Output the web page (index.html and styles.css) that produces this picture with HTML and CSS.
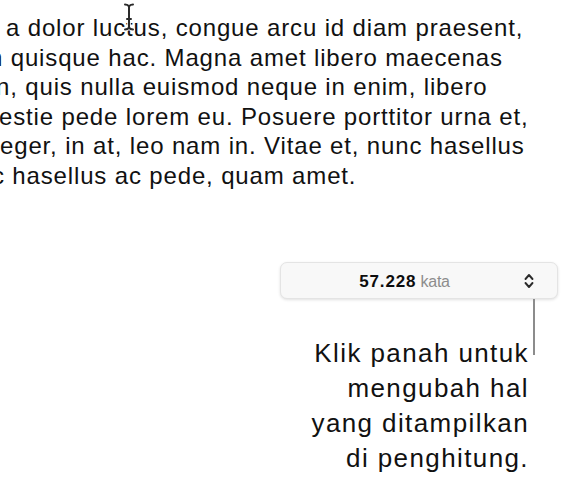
FILE: index.html
```html
<!DOCTYPE html>
<html lang="id">
<head>
<meta charset="utf-8">
<title>Penghitung kata</title>
<link rel="stylesheet" href="styles.css">
</head>
<body>
<div class="page">
  <div class="doc">
    <div class="line l1">a dolor luctus, congue arcu id diam praesent,</div>
    <div class="line l2">n quisque hac. Magna amet libero maecenas</div>
    <div class="line l3">n, quis nulla euismod neque in enim, libero</div>
    <div class="line l4">estie pede lorem eu. Posuere porttitor urna et,</div>
    <div class="line l5">eger, in at, leo nam in. Vitae et, nunc hasellus</div>
    <div class="line l6">c hasellus ac pede, quam amet.</div>
    <svg class="ibeam" width="12" height="28" viewBox="0 0 12 28" aria-hidden="true">
      <path d="M2 1.5 Q5 1.5 6 3.5 Q7 1.5 10 1.5 M6 3.5 V24.5 M2 26.5 Q5 26.5 6 24.5 Q7 26.5 10 26.5 M4 16 H8" fill="none" stroke="#fff" stroke-width="3.6" stroke-linecap="round"/>
      <path d="M2 1.5 Q5 1.5 6 3.5 Q7 1.5 10 1.5 M6 3.5 V24.5 M2 26.5 Q5 26.5 6 24.5 Q7 26.5 10 26.5 M4 16 H8" fill="none" stroke="#2a2a2a" stroke-width="2" stroke-linecap="round"/>
    </svg>
  </div>

  <div class="counter-row">
    <div class="counter">
      <span class="counter-text"><b class="count">57.228</b> <span class="unit">kata</span></span>
      <svg class="chevrons" width="10" height="18" viewBox="0 0 10 18" aria-hidden="true">
        <path d="M1.5 7 L5 3 L8.5 7 M1.5 11 L5 15 L8.5 11" fill="none" stroke="#2b2b2b" stroke-width="1.9" stroke-linecap="round" stroke-linejoin="round"/>
      </svg>
    </div>
  </div>

  <div class="callout">
    <p class="callout-text">Klik panah untuk<br>mengubah hal<br>yang ditampilkan<br>di penghitung.</p>
    <div class="leader"></div>
  </div>
</div>
</body>
</html>
```

FILE: styles.css
```css
html, body {
  margin: 0;
  padding: 0;
  background: #ffffff;
}

body {
  width: 577px;
  height: 486px;
  overflow: hidden;
  font-family: "Liberation Sans", Arial, Helvetica, sans-serif;
  color: #111111;
}

.page {
  display: flex;
  flex-direction: column;
}

.doc {
  position: relative;
  padding-top: 13px;
  overflow: hidden;
}

.line {
  font-size: 24px;
  line-height: 29.5px;
  letter-spacing: 0.85px;
  white-space: nowrap;
}

.l1 { text-indent: 6px; }
.l2 { text-indent: -11px; }
.l3 { text-indent: -4px; }
.l4 { text-indent: -1px; }
.l5 { text-indent: 0; }
.l6 { text-indent: -8px; }

.ibeam {
  position: absolute;
  left: 123px;
  top: 3px;
}

.counter-row {
  display: flex;
  justify-content: flex-end;
  padding-right: 19px;
  margin-top: 72px;
}

.counter {
  width: 278px;
  height: 37px;
  box-sizing: border-box;
  display: flex;
  align-items: center;
  padding: 0 23px 0 4px;
  background: #f8f8f8;
  border: 1px solid #e4e4e4;
  border-radius: 7px;
  box-shadow: 0 1px 3px rgba(0, 0, 0, 0.12);
}

.counter-text {
  flex: 1;
  text-align: center;
  padding-top: 3px;
  white-space: nowrap;
}

.count {
  font-size: 17px;
  font-weight: 700;
  letter-spacing: 0.8px;
  color: #0d0d0d;
}

.unit {
  font-size: 16px;
  letter-spacing: -0.3px;
  color: #8d8d8d;
}

.chevrons {
  display: block;
}

.callout {
  display: flex;
  justify-content: flex-end;
  align-items: flex-start;
  padding-right: 42px;
}

.callout-text {
  margin: 37px 4px 0 0;
  font-size: 26px;
  line-height: 35px;
  letter-spacing: 1.4px;
  text-align: right;
  color: #111111;
}

.leader {
  width: 2px;
  height: 56px;
  background: #8c8c8c;
}
```
